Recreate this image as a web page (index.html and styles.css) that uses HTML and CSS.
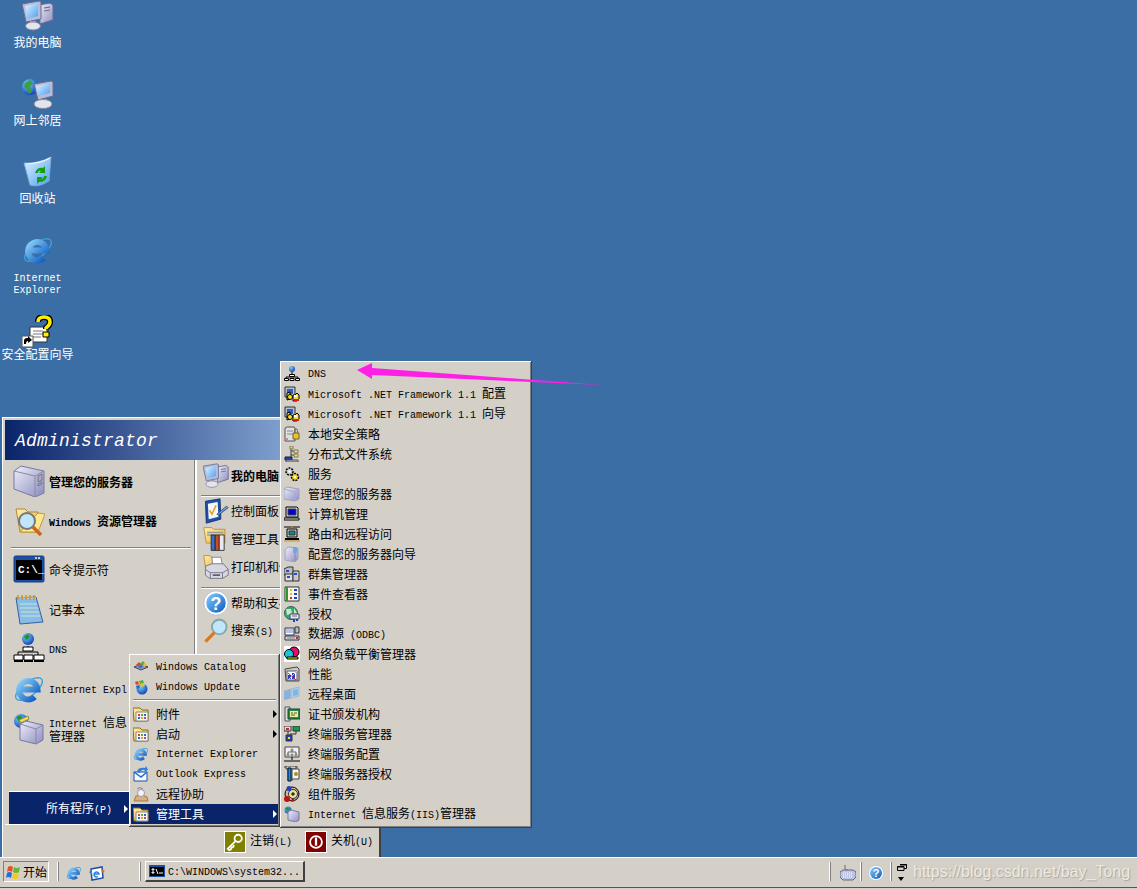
FILE: index.html
```html
<!DOCTYPE html>
<html lang="zh">
<head>
<meta charset="utf-8">
<title>Windows Server 2003</title>
<link rel="stylesheet" href="styles.css">
</head>
<body>
<svg class="sprite" xmlns="http://www.w3.org/2000/svg">
<defs>
<linearGradient id="sky" x1="0" y1="0" x2="1" y2="1"><stop offset="0" stop-color="#e4f4ff"/><stop offset="1" stop-color="#4aa0f0"/></linearGradient>
<linearGradient id="case" x1="0" y1="0" x2="1" y2="1"><stop offset="0" stop-color="#f0f0fa"/><stop offset="1" stop-color="#8c8cc0"/></linearGradient>
<linearGradient id="blue" x1="0" y1="0" x2="1" y2="1"><stop offset="0" stop-color="#8ad0fa"/><stop offset="1" stop-color="#0a58c0"/></linearGradient>
<linearGradient id="fold" x1="0" y1="0" x2="1" y2="1"><stop offset="0" stop-color="#fff2b0"/><stop offset="1" stop-color="#e8b040"/></linearGradient>
<radialGradient id="glob" cx=".35" cy=".3" r=".8"><stop offset="0" stop-color="#7ad0ff"/><stop offset="1" stop-color="#0838b0"/></radialGradient>
</defs>

<symbol id="mycomp" viewBox="0 0 32 32">
<path d="M17 5l11-2 3 2v15l-13 4z" fill="url(#case)" stroke="#666690"/><path d="M22 8l6-1M22 11l6-1" stroke="#668"/>
<path d="M0 4L17 1l2 1v17L4 22z" fill="#b8bcd8" stroke="#6a6a90"/><path d="M3 6l13-3v13L5 19z" fill="url(#sky)"/>
<path d="M8 21h6v3H8z" fill="#aab"/><ellipse cx="11" cy="26" rx="7.500" ry="4" fill="#e4e4ec" stroke="#88889c"/>
</symbol>

<symbol id="netpl" viewBox="0 0 32 32">
<circle cx="8" cy="9" r="8" fill="url(#glob)"/><path d="M3 5l5-3 3 3-3 4 2 4-3 3-2-5-3-2z" fill="#3aa040"/>
<path d="M12 6l17-3 2 1v14l-15 4z" fill="#b8bcd8" stroke="#6a6a90"/><path d="M14 8l14-3v10l-12 3z" fill="url(#sky)"/>
<path d="M19 21h6v3h-6z" fill="#aab"/><ellipse cx="21" cy="26" rx="9" ry="4.500" fill="#e4e4ec" stroke="#88889c"/>
</symbol>

<symbol id="recycle" viewBox="0 0 32 32">
<path d="M2 7Q16 8 29 1l-2 24Q16 32 8 29z" fill="url(#sky)" stroke="#7ea8d8"/>
<path d="M2 7Q15 8 29 1Q28 4 16 7Q6 9 2 7z" fill="#f4faff"/>
<path d="M13 17q2-6 8-5l2-2v7h-6l2-2q-3-1-3 2zM25 20q-1 6-8 6l-2 2v-7h6l-2 2q3 0 3-3z" fill="#12a012"/>
</symbol>

<symbol id="ie" viewBox="0 0 32 32">
<ellipse cx="16" cy="16" rx="16" ry="7" transform="rotate(-38 16 16)" fill="none" stroke="#3aa0d8" stroke-width="1.400"/>
<path d="M7 16.500h17.500a9.200 9.200 0 1 0-2.800 7.400" fill="none" stroke="url(#blue)" stroke-width="6"/>
</symbol>

<symbol id="wizard" viewBox="0 0 32 32">
<path d="M8 12h14l3 3v12H8z" fill="#fff" stroke="#333"/><path d="M11 16h10M11 19h10M11 22h8" stroke="#777"/>
<path d="M16 7q0-5 6-5 6 0 6 5 0 3-4 6v1" fill="none" stroke="#000" stroke-width="6"/><path d="M16 7q0-5 6-5 6 0 6 5 0 3-4 6v1" fill="none" stroke="#ffee00" stroke-width="3.500"/>
<path d="M21 17h6v5h-6z" fill="#ffee00" stroke="#000"/>
<path d="M0 21h11v11H0z" fill="#fff" stroke="#555"/><path d="M2 29v-3q0-3 3-3h1v-2l4 4-4 3v-2q-2 0-2 3z" fill="#000"/>
</symbol>

<symbol id="server" viewBox="0 0 32 32">
<path d="M1 6l7-5 23 5v22l-9 4L1 24z" fill="url(#case)" stroke="#7878a0"/>
<path d="M1 6l21 5 9-5M22 11v21" fill="none" stroke="#8888a8"/>
<path d="M25 11l4-2v6l-4 2zM25 19l4-2v2l-4 2z" fill="#aab" stroke="#778"/>
<path d="M26 27l2-1" stroke="#3c3"/>
</symbol>

<symbol id="explorer" viewBox="0 0 32 32">
<path d="M3 4h9l3 3h10v20H7z" fill="url(#fold)" stroke="#b08830"/><path d="M25 8l7 1-7 18H7z" fill="#ffe890" stroke="#c09838"/>
<circle cx="14" cy="16" r="8" fill="#bfe6fa" stroke="#777" stroke-width="2"/><path d="M20 22l8 8" stroke="#c86820" stroke-width="3.500"/>
</symbol>

<symbol id="cmd" viewBox="0 0 32 32">
<rect x="1" y="3" width="30" height="26" rx="1.500" fill="#1c50a8" stroke="#143c80"/><path d="M3 7h26v20H3z" fill="#000"/><path d="M22 4h2v2h-2zM25 4h2v2h-2z" fill="#bcd"/>
</symbol>
<symbol id="cmds" viewBox="0 0 16 16">
<path d="M0 2h16v12H0z" fill="#1c50a8"/><path d="M1 4h14v9H1z" fill="#000"/><path d="M3 6h2v1H3zM3 9h2v1H3zM7 6l2 5M10 10h4" stroke="#fff" fill="none"/>
</symbol>

<symbol id="notepad" viewBox="0 0 32 32">
<path d="M3 5l20-1 7 25-23 2z" fill="#88bce8" stroke="#3a6098"/><path d="M5 5h18M7 11h17M7 15h18M8 19h18M8 23h19" stroke="#c8e8c8"/>
<path d="M5 2v5M9 2v5M13 2v5M17 2v5M21 2v5" stroke="#d89020" stroke-width="1.500"/>
</symbol>

<symbol id="dns" viewBox="0 0 32 32">
<circle cx="15" cy="6" r="6" fill="url(#glob)"/><path d="M11 3l4-2 2 3-3 3-2-1z" fill="#2a9030"/>
<path d="M15 13v3M5 22v-3h20v3" fill="none" stroke="#000"/>
<path d="M10 14h10v4H10zM1 22h9v5H1zM11 22h9v5h-9zM21 22h10v5H21z" fill="#fff" stroke="#000"/>
<path d="M1 27h9v2H1zM11 27h9v2h-9zM21 27h10v2H21z" fill="#000"/>
</symbol>
<symbol id="dnss" viewBox="0 0 16 16">
<circle cx="8" cy="3" r="3" fill="url(#glob)"/><path d="M8 6v4M2 13v-2h12v2" fill="none" stroke="#000"/>
<path d="M5.500 8.500h5v2h-5zM.5 12.500h4v2h-4zM6 12.500h4v2H6zM11.500 12.500h4v2h-4z" fill="#fff" stroke="#000"/>
</symbol>

<symbol id="iis" viewBox="0 0 32 32">
<circle cx="8" cy="8" r="7" fill="url(#glob)"/><path d="M3 4l5-2 2 4-4 3z" fill="#2a9030"/><path d="M6 7l9-4 1 3-8 4z" fill="#f0e040" stroke="#887"/>
<path d="M7 11l6-3 17 4v15l-7 4-16-4z" fill="url(#case)" stroke="#7878a0"/><path d="M7 11l16 5 7-4M23 16v15" fill="none" stroke="#8888a8"/>
</symbol>
<symbol id="iiss" viewBox="0 0 16 16">
<circle cx="4" cy="4" r="3.500" fill="url(#glob)"/><path d="M1 2l3-1 2 2-3 2z" fill="#2a9030"/>
<path d="M4 6l3-2 8 2v8l-3 2-8-2z" fill="url(#case)" stroke="#7878a0"/>
</symbol>

<symbol id="cpanel" viewBox="0 0 32 32">
<path d="M3 4l18-3 1 25-18 5z" fill="#1c50a8" stroke="#102c70"/><path d="M6 7l12-2 1 18-12 3z" fill="#f4f8ff"/>
<path d="M8 15l3 5 5-11" fill="none" stroke="#f0a020" stroke-width="2"/>
<path d="M17 20L29 10l2 2-12 9z" fill="#6aa0e0" stroke="#345"/>
</symbol>

<symbol id="admin" viewBox="0 0 32 32">
<path d="M1 2h10l2 2h14v17H4z" fill="url(#fold)" stroke="#b08830"/><path d="M5 8h20M5 11h8" stroke="#999" stroke-width="2"/>
<path d="M10 11h5v19h-5z" fill="#3a70c8" stroke="#123"/><path d="M15 11h5v19h-5z" fill="#d84820" stroke="#123"/><path d="M20 11h6v19h-6z" fill="#e8e8f0" stroke="#123"/>
</symbol>

<symbol id="printer" viewBox="0 0 32 32">
<path d="M1 2h8l2 3h7v12H3z" fill="url(#fold)" stroke="#b08830"/>
<path d="M11 4h11l2 10H12z" fill="#fff" stroke="#778"/>
<path d="M3 15l8-3h14l6 7v7l-7 4H8l-5-4z" fill="#d8d8e4" stroke="#667"/><path d="M3 19l6 4h15l7-4M9 23v7M24 23v7" fill="none" stroke="#667"/><path d="M12 25h9v2h-9z" fill="#556"/>
</symbol>

<symbol id="helpbase" viewBox="0 0 32 32">
<circle cx="16" cy="16" r="15" fill="#fff" stroke="#b0b8d0"/><circle cx="16" cy="16" r="12" fill="url(#blue)"/>
</symbol>

<symbol id="search" viewBox="0 0 32 32">
<circle cx="20" cy="11" r="9" fill="#bfe6fa" stroke="#8aa" stroke-width="2.500"/><path d="M14 18L3 29" stroke="#d87820" stroke-width="4"/>
</symbol>

<symbol id="catalog" viewBox="0 0 16 16">
<path d="M1 8l7-3 7 3-7 3z" fill="#8a9ac8" stroke="#445"/><path d="M3 6l3-3 2 2-3 2z" fill="#e04818"/><path d="M7 5l3-3 2 2-3 2z" fill="#58b030"/><path d="M10 6l2-2 2 2-3 2z" fill="#f0c020"/><path d="M5 8l3-2 2 2-3 1z" fill="#2868d0"/>
</symbol>
<symbol id="update" viewBox="0 0 16 16">
<circle cx="9" cy="10" r="5.500" fill="url(#glob)"/><path d="M2 3l3-1 1 3-3 1z" fill="#e04818"/><path d="M6 2l4-1 1 3-4 1z" fill="#58b030"/><path d="M3 7l3-1 1 3-3 1z" fill="#2868d0"/><path d="M7 5l4-1 1 3-4 1z" fill="#f0c020"/>
</symbol>
<symbol id="flag" viewBox="0 0 16 16">
<path d="M2 3q2-2 5 0l-1 5q-3-2-5 0z" fill="#e85020"/><path d="M8 3q3 2 6 0l-1 5q-3 2-6 0z" fill="#68b830"/><path d="M1 9q2-2 5 0l-1 5q-3-2-5 0z" fill="#2868e0"/><path d="M7 9q3 2 6 0l-1 5q-3 2-6 0z" fill="#f8c820"/>
</symbol>
<symbol id="progs" viewBox="0 0 16 16">
<path d="M0 2h7l2 2h6v11H1z" fill="url(#fold)" stroke="#886820"/><path d="M3 6h12v9H3z" fill="#f8f8f8" stroke="#887"/><path d="M5 8h2v2H5z" fill="#e04818"/><path d="M8 8h2v2H8z" fill="#58b030"/><path d="M11 8h2v2h-2z" fill="#2868d0"/><path d="M5 11h2v2H5z" fill="#2868d0"/><path d="M8 11h2v2H8z" fill="#e8a020"/><path d="M11 11h2v2h-2z" fill="#a048b0"/>
</symbol>
<symbol id="ies" viewBox="0 0 16 16">
<ellipse cx="8" cy="8" rx="8" ry="3.500" transform="rotate(-38 8 8)" fill="none" stroke="#3aa0d8" stroke-width=".8"/>
<path d="M3.500 8.200h8.800a4.600 4.600 0 1 0-1.400 3.700" fill="none" stroke="url(#blue)" stroke-width="3"/>
</symbol>
<symbol id="oe" viewBox="0 0 16 16">
<path d="M2 4l11-2 1 11-11 2z" fill="#fff" stroke="#1c50a8" stroke-width="1.500"/><path d="M5 9h5a2.500 2.500 0 1 0-1 2.500" fill="none" stroke="#2a80e0" stroke-width="1.500"/><path d="M0 7l3-2v5z" fill="#2a80e0"/><circle cx="14" cy="6" r="1.500" fill="#e87020"/>
</symbol>
<symbol id="oem" viewBox="0 0 16 16">
<path d="M1 6h13v9H1z" fill="#f8f8ff" stroke="#1c50a8"/><path d="M1 6l7 5 6-5" fill="none" stroke="#2868d0" stroke-width="1.500"/><path d="M4 6q1-5 8-4l1-2 2 4-4 2 1-2q-4-1-5 3z" fill="#2a80e0"/>
</symbol>
<symbol id="remote" viewBox="0 0 16 16">
<path d="M1 15l2-5 6-1 5 2 1 4z" fill="#d8b080" stroke="#a87840"/><circle cx="8" cy="7" r="3.500" fill="#f4f4f8" stroke="#99a"/><path d="M4 3q3-3 6 0" fill="none" stroke="#889"/>
</symbol>
<symbol id="net" viewBox="0 0 16 16">
<path d="M1 1h10v10H1z" fill="#b8c0d0" stroke="#333"/><path d="M3 3h6v5H3z" fill="#3060c0"/>
<path d="M3 7l3-1v7l-3 1zM9 9h2l2-2 2 2v4l-2 2H9z" fill="#ffe020" stroke="#000"/><circle cx="6" cy="11" r="2.500" fill="#ffe020" stroke="#000"/><path d="M10 13h5v2h-5z" fill="#e01818"/><path d="M10 9h3v2h-3z" fill="#fff"/>
</symbol>
<symbol id="lock" viewBox="0 0 16 16">
<path d="M1 2l2-1h7l1 1v13H1z" fill="#e0e0e0" stroke="#555"/><path d="M3 5h6M3 8h6" stroke="#888"/><path d="M2 13h2" stroke="#e02020"/>
<path d="M9 7h6v6H9z" fill="#f0c020" stroke="#664"/><path d="M10.500 7V4.500a1.500 1.500 0 0 1 3 0V7" fill="none" stroke="#664"/>
</symbol>
<symbol id="dfs" viewBox="0 0 16 16">
<path d="M7 2v10M7 5h3M7 9h3" stroke="#444" fill="none"/><path d="M6 0h3v3H6zM10 4h4v3h-4zM10 8h4v3h-4z" fill="#f0e060" stroke="#776"/><path d="M1 11h7v3H1z" fill="#1c40c0" stroke="#123"/><path d="M2 14h12v2H2z" fill="#bbb" stroke="#555"/>
</symbol>
<symbol id="gears" viewBox="0 0 16 16">
<circle cx="5.500" cy="5.500" r="3.500" fill="#c8c8c8" stroke="#000" stroke-width="1.500" stroke-dasharray="2 1"/><circle cx="5.500" cy="5.500" r="1.200" fill="#fff"/>
<circle cx="11" cy="11" r="3.500" fill="#f0d020" stroke="#000" stroke-width="1.500" stroke-dasharray="2 1"/><circle cx="11" cy="11" r="1.200" fill="#fff"/>
</symbol>
<symbol id="servers" viewBox="0 0 16 16">
<path d="M0 3l3-2 12 2v10l-4 2-11-2z" fill="url(#case)" stroke="#a0a0c8"/><path d="M0 3l11 3 4-3M11 6v9" fill="none" stroke="#a8a8c8"/>
</symbol>
<symbol id="compm" viewBox="0 0 16 16">
<path d="M2 1h11l1 1v9H2z" fill="#d8d8d8" stroke="#000"/><path d="M4 3h8v6H4z" fill="#0000d0" stroke="#444"/><path d="M0 12h15v2H0z" fill="#e8e8e8" stroke="#000"/><path d="M9 13h4" stroke="#2a2"/>
</symbol>
<symbol id="rras" viewBox="0 0 16 16">
<path d="M0 1h16" stroke="#000"/><path d="M8 0v4M0 15h16M8 12v3" stroke="#c89020"/><path d="M3 3h10v8H3z" fill="#ccc" stroke="#000"/><path d="M5 5h6v4H5z" fill="#188" stroke="#333"/><path d="M1 13h14" stroke="#000" stroke-width="2"/>
</symbol>
<symbol id="srvwiz" viewBox="0 0 16 16">
<path d="M1 4l3-3 10 1v11l-3 3-10-2z" fill="url(#case)" stroke="#a0a0c8"/><path d="M9 1h3l2 3-2 3H9z" fill="#5aa0e8" opacity=".8"/><path d="M11 7v8" stroke="#88a"/>
</symbol>
<symbol id="cluster" viewBox="0 0 16 16">
<path d="M0 3l4-2h5v8H0z" fill="#bbb" stroke="#333"/><path d="M2 4h3v2H2z" fill="#2050d0"/>
<path d="M1 8h8v7H1z" fill="#ddd" stroke="#333"/><path d="M3 10h3v2H3z" fill="#2050d0"/><path d="M9 5h6v10H9z" fill="#c8c8c8" stroke="#333"/><path d="M10 7h3v2h-3z" fill="#2050d0"/>
</symbol>
<symbol id="event" viewBox="0 0 16 16">
<path d="M1 1h14v14H1z" fill="#f8f8f0" stroke="#333"/><path d="M3 1v14" stroke="#2a9a2a" stroke-width="2"/><path d="M6 3h2v2H6zM6 7h2v2H6z" fill="#e8c020"/><path d="M6 11h2v2H6z" fill="#e02020"/><path d="M10 3h3v2h-3zM10 7h3v2h-3zM10 11h3v2h-3z" fill="#2040c0"/>
</symbol>
<symbol id="license" viewBox="0 0 16 16">
<circle cx="7" cy="7" r="6.500" fill="#3aa868" stroke="#3a6050"/><path d="M2 3h5l1 5-5 1zM10 2l3 5-3 1z" fill="#c0e8d0"/>
<path d="M6 8h9v5H6z" fill="#e8e8f8" stroke="#445"/><path d="M8 10h5" stroke="#668"/><path d="M9 13h2v3H9zM12 13h2v2h-2z" fill="#2040c0"/>
</symbol>
<symbol id="odbc" viewBox="0 0 16 16">
<path d="M1 2h9v7H1z" fill="#fff" stroke="#334"/><path d="M2 4h7M2 6h7" stroke="#68c"/><path d="M11 1h4v6h-4z" fill="#bbb" stroke="#334"/><path d="M1 10h14v4H1z" fill="#ddd" stroke="#334"/><path d="M3 12h8" stroke="#778"/><path d="M12 11h2v2h-2z" fill="#e02020"/>
</symbol>
<symbol id="nlb" viewBox="0 0 16 16">
<path d="M0 0h16v16H0z" fill="#fff"/><circle cx="10" cy="6" r="5" fill="#e0106a" stroke="#000"/><circle cx="5" cy="8" r="4.500" fill="#18c8d8" stroke="#000"/><path d="M3 11h11v2H3z" fill="#f0e020" stroke="#000"/>
</symbol>
<symbol id="perf" viewBox="0 0 16 16">
<path d="M1 3l12-2 2 2v12H2z" fill="#ccc" stroke="#444"/><path d="M3 5h10v9H3z" fill="#fff" stroke="#556"/><path d="M4 13V9h3v4zM8 13V7h3v6z" fill="#2040c0"/><path d="M4 7l8 7" stroke="#e02020"/><path d="M4 14L13 5" stroke="#f0d020"/>
</symbol>
<symbol id="rdp" viewBox="0 0 16 16">
<path d="M0 5l7-2v9l-7 2z" fill="#8ab0d8" stroke="#a8b8c8"/><path d="M7 3l8-2v9l-8 2z" fill="#a8d0f0" stroke="#a8b8c8"/><path d="M2 6l4-1v6l-4 1zM9 4l5-1v6l-5 1z" fill="#7ab8e8"/>
</symbol>
<symbol id="cert" viewBox="0 0 16 16">
<path d="M1 1h5v14H1z" fill="#ddd" stroke="#556"/><path d="M4 3h12v10H4z" fill="#2a8a4a" stroke="#143"/><path d="M6 5h8v6H6z" fill="#ecec90"/><path d="M7 7h2M10 7h3M7 9h4" stroke="#555"/>
</symbol>
<symbol id="tsmgr" viewBox="0 0 16 16">
<path d="M0 0h7v5H0z" fill="#ddd" stroke="#333"/><path d="M2 2h3v2H2z" fill="#e02020"/><path d="M9 0h7v5H9z" fill="#1c9a4a" stroke="#333"/><path d="M4 5v4M12 5v3H6M6 8v2" stroke="#333" fill="none"/>
<path d="M2 9h6v6H2z" fill="#2040c0" stroke="#333"/><path d="M4 11h2v2H4z" fill="#ffe020"/>
</symbol>
<symbol id="tscfg" viewBox="0 0 16 16">
<path d="M1 1h14v10H1z" fill="#f0f0f0" stroke="#444"/><path d="M8 4v2M4 9V6h8v3" stroke="#666" fill="none"/><path d="M7 3h2v2H7zM3 8h2v2H3zM7 8h2v2H7zM11 8h2v2h-2z" fill="#bbb" stroke="#555" stroke-width=".5"/><path d="M8 11v3M0 15h16" stroke="#000"/>
</symbol>
<symbol id="tslic" viewBox="0 0 16 16">
<path d="M0 1h14M4 1v14M8 1v14" stroke="#444" fill="none"/><path d="M2 0h10v3H2z" fill="#ccc" stroke="#444"/><path d="M4 2h3v13H4z" fill="#1890e8" stroke="#012"/><path d="M8 3h7v10H8z" fill="#f4f4f4" stroke="#444"/><circle cx="12" cy="8" r="2" fill="#b09020"/>
</symbol>
<symbol id="comsvc" viewBox="0 0 16 16">
<circle cx="8" cy="8" r="7" fill="#c8b8a0" stroke="#000"/><circle cx="9" cy="8" r="4.500" fill="#f0e0a0" stroke="#333"/><path d="M7 8h4M9 6v4" stroke="#000"/><circle cx="5" cy="2.500" r="2.500" fill="#2040c0"/><circle cx="3" cy="13" r="3" fill="#c01010"/><circle cx="9" cy="14" r="1.500" fill="#c01010"/>
</symbol>
<symbol id="kbd" viewBox="0 0 16 16">
<path d="M5 0v4q0 1 2 1h1" fill="none" stroke="#667"/><path d="M0 7l3-2h10l3 2v5l-3 3H3l-3-3z" fill="#bcc4e4" stroke="#667"/><path d="M3 8h10M3 10h10M3 12h10" stroke="#fff" stroke-dasharray="1 1"/>
</symbol>
<symbol id="key" viewBox="0 0 22 22">
<circle cx="14.500" cy="7" r="4" fill="none" stroke="#fff" stroke-width="2"/><path d="M11.500 10L3 18.500l1.500 1.500 2-1 1-2 1.500-.5 1-2" fill="none" stroke="#fff" stroke-width="2"/>
</symbol>
<symbol id="power" viewBox="0 0 22 22">
<circle cx="11" cy="11" r="6.500" fill="none" stroke="#fff" stroke-width="2"/><path d="M11 6v9" stroke="#fff" stroke-width="2.500"/>
</symbol>
<symbol id="restore" viewBox="0 0 10 7">
<path d="M3 .5h6.500v4H7M.5 2.500h6.500v4H.5z" fill="none" stroke="#000"/><path d="M3 1h7M0 3h7" stroke="#000"/>
</symbol>
</svg>

<main class="desktop">
  <div class="dicon"><svg class="i32"><use href="#mycomp"/></svg><span class="dlabel">我的电脑</span></div>
  <div class="dicon"><svg class="i32"><use href="#netpl"/></svg><span class="dlabel">网上邻居</span></div>
  <div class="dicon"><svg class="i32"><use href="#recycle"/></svg><span class="dlabel">回收站</span></div>
  <div class="dicon"><svg class="i32"><use href="#ie"/></svg><span class="dlabel two"><span class="l lb">Internet</span><span class="l lb">Explorer</span></span></div>
  <div class="dicon wiz"><svg class="i32"><use href="#wizard"/></svg><span class="dlabel">安全配置向导</span></div>

  <section class="startmenu">
    <header class="banner"><span class="user">Administrator</span></header>
    <div class="panels">
      <div class="pleft">
        <div class="row b"><svg class="i32"><use href="#server"/></svg><span class="t">管理您的服务器</span></div>
        <div class="row b"><svg class="i32"><use href="#explorer"/></svg><span class="t"><span class="l">Windows </span>资源管理器</span></div>
        <div class="lsep"></div>
        <div class="row"><svg class="i32"><use href="#cmd"/><text x="5" y="20" class="cmdtxt">C:\_</text></svg><span class="t">命令提示符</span></div>
        <div class="row"><svg class="i32"><use href="#notepad"/></svg><span class="t">记事本</span></div>
        <div class="row"><svg class="i32"><use href="#dns"/></svg><span class="t lat"><span class="l">DNS</span></span></div>
        <div class="row"><svg class="i32"><use href="#ie"/></svg><span class="t lat"><span class="l">Internet Expl</span></span></div>
        <div class="row"><svg class="i32"><use href="#iis"/></svg><span class="t lat"><span class="ln"><span class="l">Internet </span>信息</span><span class="ln">管理器</span></span></div>
        <div class="allprog"><span>所有程序<span class="l">(P)</span></span><i class="arr w"></i></div>
      </div>
      <div class="pright">
        <div class="rrow b"><svg class="i26"><use href="#mycomp"/></svg><span>我的电脑</span></div>
        <div class="rsep"></div>
        <div class="rrow"><svg class="i26"><use href="#cpanel"/></svg><span>控制面板</span></div>
        <div class="rrow"><svg class="i26"><use href="#admin"/></svg><span>管理工具</span></div>
        <div class="rrow"><svg class="i26"><use href="#printer"/></svg><span>打印机和传真</span></div>
        <div class="rsep tall"></div>
        <div class="rrow"><svg class="i26" viewBox="0 0 32 32"><use href="#helpbase"/><text x="16" y="24" class="qmark">?</text></svg><span>帮助和支持</span></div>
        <div class="rrow"><svg class="i26"><use href="#search"/></svg><span>搜索<span class="l">(S)</span></span></div>
      </div>
    </div>
    <footer class="mfoot">
      <div class="fbtn"><span class="sq olive"><svg class="i20"><use href="#key"/></svg></span><span>注销<span class="l">(L)</span></span></div>
      <div class="fbtn"><span class="sq maroon"><svg class="i20"><use href="#power"/></svg></span><span>关机<span class="l">(U)</span></span></div>
    </footer>
  </section>

  <nav class="sub sub1">
    <div class="mi"><svg class="i16"><use href="#catalog"/></svg><span class="l">Windows Catalog</span></div>
    <div class="mi"><svg class="i16"><use href="#update"/></svg><span class="l">Windows Update</span></div>
    <div class="msep"></div>
    <div class="mi"><svg class="i16"><use href="#progs"/></svg><span>附件</span><i class="arr"></i></div>
    <div class="mi"><svg class="i16"><use href="#progs"/></svg><span>启动</span><i class="arr"></i></div>
    <div class="mi"><svg class="i16"><use href="#ies"/></svg><span class="l">Internet Explorer</span></div>
    <div class="mi"><svg class="i16"><use href="#oem"/></svg><span class="l">Outlook Express</span></div>
    <div class="mi"><svg class="i16"><use href="#remote"/></svg><span>远程协助</span></div>
    <div class="mi on"><svg class="i16"><use href="#progs"/></svg><span>管理工具</span><i class="arr w"></i></div>
  </nav>

  <nav class="sub sub2">
    <div class="mi"><svg class="i16"><use href="#dnss"/></svg><span class="l">DNS</span></div>
    <div class="mi"><svg class="i16"><use href="#net"/></svg><span><span class="l">Microsoft .NET Framework 1.1 </span>配置</span></div>
    <div class="mi"><svg class="i16"><use href="#net"/></svg><span><span class="l">Microsoft .NET Framework 1.1 </span>向导</span></div>
    <div class="mi"><svg class="i16"><use href="#lock"/></svg><span>本地安全策略</span></div>
    <div class="mi"><svg class="i16"><use href="#dfs"/></svg><span>分布式文件系统</span></div>
    <div class="mi"><svg class="i16"><use href="#gears"/></svg><span>服务</span></div>
    <div class="mi"><svg class="i16"><use href="#servers"/></svg><span>管理您的服务器</span></div>
    <div class="mi"><svg class="i16"><use href="#compm"/></svg><span>计算机管理</span></div>
    <div class="mi"><svg class="i16"><use href="#rras"/></svg><span>路由和远程访问</span></div>
    <div class="mi"><svg class="i16"><use href="#srvwiz"/></svg><span>配置您的服务器向导</span></div>
    <div class="mi"><svg class="i16"><use href="#cluster"/></svg><span>群集管理器</span></div>
    <div class="mi"><svg class="i16"><use href="#event"/></svg><span>事件查看器</span></div>
    <div class="mi"><svg class="i16"><use href="#license"/></svg><span>授权</span></div>
    <div class="mi"><svg class="i16"><use href="#odbc"/></svg><span>数据源<span class="l"> (ODBC)</span></span></div>
    <div class="mi"><svg class="i16"><use href="#nlb"/></svg><span>网络负载平衡管理器</span></div>
    <div class="mi"><svg class="i16"><use href="#perf"/></svg><span>性能</span></div>
    <div class="mi"><svg class="i16"><use href="#rdp"/></svg><span>远程桌面</span></div>
    <div class="mi"><svg class="i16"><use href="#cert"/></svg><span>证书颁发机构</span></div>
    <div class="mi"><svg class="i16"><use href="#tsmgr"/></svg><span>终端服务管理器</span></div>
    <div class="mi"><svg class="i16"><use href="#tscfg"/></svg><span>终端服务配置</span></div>
    <div class="mi"><svg class="i16"><use href="#tslic"/></svg><span>终端服务器授权</span></div>
    <div class="mi"><svg class="i16"><use href="#comsvc"/></svg><span>组件服务</span></div>
    <div class="mi"><svg class="i16"><use href="#iiss"/></svg><span><span class="l">Internet </span>信息服务<span class="l">(IIS)</span>管理器</span></div>
  </nav>

  <svg class="pointer" viewBox="0 0 250 30"><path d="M2 10L17 3v5L248 25 17 15v4z" fill="#ff1ee6"/></svg>
</main>

<footer class="taskbar">
  <div class="startbtn"><svg class="i16"><use href="#flag"/></svg><span>开始</span></div>
  <div class="tsep s1"></div>
  <svg class="i16 q1"><use href="#ies"/></svg>
  <svg class="i16 q2"><use href="#oe"/></svg>
  <div class="tsep s2"></div>
  <div class="task"><svg class="i16"><use href="#cmds"/></svg><span class="l tasklabel">C:\WINDOWS\system32...</span></div>
  <div class="tray">
    <div class="tsep"></div>
    <svg class="i16 kb"><use href="#kbd"/></svg>
    <div class="tsep"></div>
    <svg class="i16 hp" viewBox="0 0 32 32"><use href="#helpbase"/><text x="16" y="24" class="qmark">?</text></svg>
    <div class="tsep"></div>
    <div class="rest"><svg class="rs"><use href="#restore"/></svg><i class="down"></i></div>
    <span class="mark">https://blog.csdn.net/bay_Tong</span>
  </div>
</footer>
</body>
</html>
```

FILE: styles.css
```css
* { box-sizing: border-box; }
html, body { margin: 0; height: 100%; overflow: hidden; }
body {
  background: #d4d0c8;
  color: #000;
  font: 12px/12px "Noto Sans CJK SC", sans-serif;
}
.sprite { position: absolute; width: 0; height: 0; }
.cmdtxt { font: bold 11px "Liberation Mono", monospace; fill: #fff; }
.qmark { font: bold 22px "Liberation Sans", sans-serif; fill: #fff; text-anchor: middle; }
svg { display: block; flex: none; }
.i32 { width: 32px; height: 32px; }
.i26 { width: 26px; height: 26px; }
.i20 { width: 20px; height: 20px; }
.i16 { width: 16px; height: 16px; }
.l { font: 10px/12px "Liberation Mono", monospace; }
.lb { display: block; }

/* desktop */
.desktop { position: relative; height: 857px; background: #3a6ea5; }
.dicon { width: 75px; height: 78px; display: flex; flex-direction: column; align-items: center; color: #fff; text-align: center; }
.dlabel { margin-top: 4px; white-space: nowrap; }
.dlabel.two { margin-top: 7px; }
.wiz { margin-top: 3px; }
.wiz .dlabel { margin-top: 1px; }

/* start menu */
.startmenu {
  position: absolute; left: 2px; top: 417px; width: 379px; height: 443px;
  padding: 3px 1px 0 3px;
  display: flex; flex-direction: column;
  background: #d4d0c8;
  border-right: 2px solid #404040; border-bottom: 2px solid #404040;
  box-shadow: inset 1px 1px 0 #fff;
}
.banner {
  height: 40px; flex: none; padding: 2px 0 0 10px;
  display: flex; align-items: center;
  background: linear-gradient(90deg, #0a246a, #a6caf0);
}
.user { font: italic 18px/20px "Liberation Mono", monospace; color: #fff; letter-spacing: .2px; }
.panels { display: flex; height: 365px; flex: none; border-bottom: 1px solid #fff; }
.pleft { width: 190px; flex: none; padding-top: 1px; display: flex; flex-direction: column; white-space: nowrap; }
.row { height: 40px; flex: none; display: flex; align-items: center; padding-left: 8px; gap: 4px; }
.t { padding-top: 2px; }
.t.lat { padding-top: 0; }
.ln { display: block; height: 14px; line-height: 14px; }
.b { font-weight: bold; }
.b .l { font-weight: bold; }
.lsep { height: 8px; flex: none; margin: 0 4px 0 6px; background: linear-gradient(#d4d0c8 6px, #808080 6px, #808080 7px, #fff 7px); }
.allprog {
  margin: auto 0 0 4px; height: 33px; width: 120px; flex: none;
  padding: 2px 0 0 37px; display: flex; align-items: center; gap: 12px;
  background: #0a246a; color: #fff;
  border-top: 1px solid #fff;
}
.pright { flex: 1; padding-top: 2px; border-left: 2px solid #fff; box-shadow: -1px 0 0 #808080; white-space: nowrap; }
.rrow { height: 28px; display: flex; align-items: center; padding-left: 6px; gap: 2px; }
.rsep { height: 7px; margin: 0 4px; background: linear-gradient(#d4d0c8 5px, #808080 5px, #808080 6px, #fff 6px); }
.rsep.tall { height: 8px; background: linear-gradient(#d4d0c8 6px, #808080 6px, #808080 7px, #fff 7px); }
.mfoot { flex: 1; display: flex; justify-content: flex-end; align-items: center; padding: 0 5px 0 0; gap: 13px; }
.fbtn { display: flex; align-items: center; gap: 4px; }
.sq { width: 22px; height: 22px; padding: 0; display: block; border: 1px solid #fff; }
.olive { background: #808000; }
.maroon { background: #800000; }

/* flyouts */
.sub {
  position: absolute; background: #d4d0c8; white-space: nowrap;
  border-right: 1px solid #404040; border-bottom: 1px solid #404040;
  box-shadow: inset 1px 1px 0 #fff, inset -1px -1px 0 #808080;
}
.sub1 { left: 129px; top: 654px; width: 151px; padding: 3px 1px 2px 2px; }
.sub2 { left: 280px; top: 361px; width: 252px; padding: 3px; }
.mi { height: 20px; display: flex; align-items: center; }
.mi > .l { padding-top: 2px; }
.sub1 .mi { padding-left: 2px; gap: 7px; }
.sub2 .mi { padding-left: 1px; gap: 8px; }
.on { background: #0a246a; color: #fff; }
.msep { height: 7px; margin: 0 2px; background: linear-gradient(#d4d0c8 2px, #808080 2px, #808080 3px, #fff 3px, #fff 4px, #d4d0c8 4px); }
.arr { margin-left: auto; margin-right: 1px; width: 0; height: 0; border-style: solid; border-width: 4px 0 4px 4px; border-color: transparent transparent transparent #000; }
.arr.w { border-left-color: #fff; }
.allprog .arr { margin-left: 0; }
.pointer { position: absolute; left: 355px; top: 360px; width: 250px; height: 30px; }

/* taskbar */
.taskbar {
  position: relative; height: 32px; padding: 4px 0 6px 3px;
  display: flex; align-items: stretch;
  background: #d4d0c8;
  box-shadow: inset 0 1px 0 #fff;
  border-bottom: 1px solid #d4d0c8;
}
.taskbar::after { content: ""; position: absolute; left: 0; right: 0; bottom: 0; height: 1px; background: #555; }
.startbtn {
  width: 46px; display: flex; align-items: center; gap: 1px; padding-left: 2px;
  border: 1px solid; border-color: #808080 #fff #fff #808080;
}
.tsep { width: 2px; margin: 1px 0; background: #fff; border-right: 1px solid #808080; flex: none; }
.s1 { margin-left: 8px; }
.q1 { margin: 4px 0 0 7px; }
.q2 { margin: 4px 0 0 7px; }
.s2 { margin-left: 34px; }
.task {
  width: 160px; margin-left: 4px; display: flex; align-items: center; gap: 3px; padding-left: 3px;
  background: #d4d0c8;
  border: 1px solid; border-color: #fff #404040 #404040 #fff;
  border-width: 1px 2px 2px 1px;
}
.tasklabel { padding-top: 3px; }
.tray { margin-left: auto; display: flex; align-items: stretch; width: 308px; }
.kb { margin: 4px 4px 0 9px; }
.hp { margin: 4px 6px 0 6px; }
.rest { width: 21px; padding-left: 5px; display: flex; flex-direction: column; gap: 6px; padding-top: 3px; }
.rs { width: 10px; height: 7px; }
.down { width: 0; height: 0; margin-left: 1px; border-style: solid; border-width: 4px 3px 0; border-color: #000 transparent transparent; }
.mark { font: 16px/21px "Liberation Sans", sans-serif; color: #ece9e2; text-shadow: 1px 1px 1px #aaa69c; white-space: nowrap; }
```
